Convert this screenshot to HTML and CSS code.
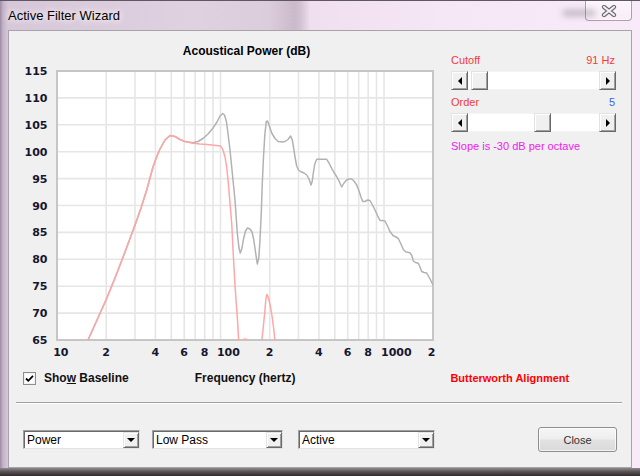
FILE: index.html
```html
<!DOCTYPE html>
<html>
<head>
<meta charset="utf-8">
<title>Active Filter Wizard</title>
<link rel="stylesheet" href="styles.css">
</head>
<body>
<div class="window">
  <div class="titlebar">
    <span class="title">Active Filter Wizard</span>
    <span class="smear"></span>
    <div class="close-btn">
      <svg class="close-x" width="16" height="12" viewBox="0 0 16 12">
        <path class="x-out" d="M3 2 L13 10 M13 2 L3 10"/>
        <path class="x-in" d="M3 2 L13 10 M13 2 L3 10"/>
      </svg>
    </div>
  </div>
  <div class="client">
    <div class="main">
      <svg class="chart" width="432" height="330" viewBox="9 31 432 330">
        <defs>
          <clipPath id="plotclip"><rect x="57" y="71" width="376" height="269.5"/></clipPath>
        </defs>
        <text class="chart-title" x="246.5" y="55" text-anchor="middle">Acoustical Power (dB)</text>
        <rect class="plot-bg" x="57" y="71" width="376" height="269"/>
        <g class="grid">
          <line x1="57" x2="433" y1="97.9" y2="97.9"/>
          <line x1="57" x2="433" y1="124.8" y2="124.8"/>
          <line x1="57" x2="433" y1="151.7" y2="151.7"/>
          <line x1="57" x2="433" y1="178.6" y2="178.6"/>
          <line x1="57" x2="433" y1="205.5" y2="205.5"/>
          <line x1="57" x2="433" y1="232.4" y2="232.4"/>
          <line x1="57" x2="433" y1="259.3" y2="259.3"/>
          <line x1="57" x2="433" y1="286.2" y2="286.2"/>
          <line x1="57" x2="433" y1="313.1" y2="313.1"/>
          <line y1="71" y2="340" x1="106.2" x2="106.2"/>
          <line y1="71" y2="340" x1="135" x2="135"/>
          <line y1="71" y2="340" x1="155.4" x2="155.4"/>
          <line y1="71" y2="340" x1="171.3" x2="171.3"/>
          <line y1="71" y2="340" x1="184.2" x2="184.2"/>
          <line y1="71" y2="340" x1="195.2" x2="195.2"/>
          <line y1="71" y2="340" x1="204.7" x2="204.7"/>
          <line y1="71" y2="340" x1="213" x2="213"/>
          <line y1="71" y2="340" x1="220.5" x2="220.5"/>
          <line y1="71" y2="340" x1="269.7" x2="269.7"/>
          <line y1="71" y2="340" x1="298.5" x2="298.5"/>
          <line y1="71" y2="340" x1="318.9" x2="318.9"/>
          <line y1="71" y2="340" x1="334.8" x2="334.8"/>
          <line y1="71" y2="340" x1="347.7" x2="347.7"/>
          <line y1="71" y2="340" x1="358.7" x2="358.7"/>
          <line y1="71" y2="340" x1="368.2" x2="368.2"/>
          <line y1="71" y2="340" x1="376.5" x2="376.5"/>
          <line y1="71" y2="340" x1="384" x2="384"/>
        </g>
        <rect class="plot-border" x="57" y="71" width="376" height="269"/>
        <g clip-path="url(#plotclip)">
          <polyline class="curve-grey" points="88,340 97,320 106,300 115,278 125,252 135,225 141,208 146.7,190 150,178 153,167 157,156 160,149 165,140 170,135.5 175,136.5 180,139.5 185,141.5 193,142.8 198,141.5 203,138.5 208,134 213,128 217,122 220,116 222.7,113.5 224.5,115 226.5,122 228.3,136 230,150 231.7,167 235,200 237.3,233 239,248 240.3,253 242,248 243.5,239 245.5,231 247.5,228 250,229 252,232 253.8,240 255.5,252 257.3,264 258.8,258 260,240 261.3,212 262.3,183 263.5,157 264.8,135 266.3,121.5 267.5,121 269,125 271.7,133 275,138.5 278.3,141.5 282,142 285,141.5 288,139.5 290.7,136 292.3,140 293.5,147 295,157 296.7,166 298.5,170 300.5,171.5 304,173 306.7,175 309,179 311,185 312.3,181 313.3,173 314.8,164 316.7,159.3 321,159.3 326.7,159.3 329,163 331.7,168.3 334,172.5 336.7,176.7 339,181 341.7,187 344,183 346.7,180 349,179 351.7,179 354,181 356.7,185 359,191 361,197 362.7,201.5 365,201.5 367.5,200 370,200.5 372.5,205 375,210 377.5,215.5 380,220.5 382.5,220.5 385,221 387.5,226 390,231.5 393,235.5 396,237 398.3,238.5 400.5,243 403.3,249.5 406,252 410,252.7 412,256 413.3,261 415.5,262.5 418.3,263.3 420,267 421.7,271.5 424,272.5 426.7,273 429.5,278 433,285"/>
          <polyline class="curve-red" points="88,340 97,320 106,300 115,278 125,252 135,225 141,208 146.7,190 150,178 153,167 157,156 160,149 165,140 170,135.5 175,136.5 180,139.5 185,141.5 193,143.3 200,144 207,144.5 214,145.3 219,145.8 221,146.5 223,150 225,157 226.8,168 228.3,183 230,203 231.7,223 233.3,255 235,285 236,300 237.5,320 238.7,341"/>
          <polyline class="curve-red" points="242,341 243.5,339.3 246.5,339.3 248,341"/>
          <polyline class="curve-red" points="261.7,341 263,330 264.5,315 265.8,300 266.7,294.5 267.8,296 269,300 270.5,307 272,316 273.5,327 275,341"/>
        </g>
        <g class="axis">
          <text x="47.5" y="75" text-anchor="end">115</text>
          <text x="47.5" y="101.9" text-anchor="end">110</text>
          <text x="47.5" y="128.8" text-anchor="end">105</text>
          <text x="47.5" y="155.7" text-anchor="end">100</text>
          <text x="47.5" y="182.6" text-anchor="end">95</text>
          <text x="47.5" y="209.5" text-anchor="end">90</text>
          <text x="47.5" y="236.4" text-anchor="end">85</text>
          <text x="47.5" y="263.3" text-anchor="end">80</text>
          <text x="47.5" y="290.2" text-anchor="end">75</text>
          <text x="47.5" y="317.1" text-anchor="end">70</text>
          <text x="47.5" y="344" text-anchor="end">65</text>
          <text x="53.2" y="356">10</text>
          <text x="106.2" y="356" text-anchor="middle">2</text>
          <text x="155.4" y="356" text-anchor="middle">4</text>
          <text x="184.2" y="356" text-anchor="middle">6</text>
          <text x="204.7" y="356" text-anchor="middle">8</text>
          <text x="216.9" y="356">100</text>
          <text x="269.7" y="356" text-anchor="middle">2</text>
          <text x="318.9" y="356" text-anchor="middle">4</text>
          <text x="347.7" y="356" text-anchor="middle">6</text>
          <text x="368.2" y="356" text-anchor="middle">8</text>
          <text x="381" y="356">1000</text>
          <text x="431.5" y="356" text-anchor="middle">2</text>
        </g>
      </svg>
      <div class="panel">
        <div class="plabel"><span>Cutoff</span><span>91 Hz</span></div>
        <div class="slider">
          <div class="arrow"><span class="tri-left"></span></div>
          <div class="track">
            <div class="track-space" style="width:3px"></div>
            <div class="thumb"></div>
          </div>
          <div class="arrow"><span class="tri-right"></span></div>
        </div>
        <div class="plabel order"><span>Order</span><span class="order-val">5</span></div>
        <div class="slider">
          <div class="arrow"><span class="tri-left"></span></div>
          <div class="track">
            <div class="track-space" style="width:66px"></div>
            <div class="thumb"></div>
          </div>
          <div class="arrow"><span class="tri-right"></span></div>
        </div>
        <div class="slope">Slope is -30 dB per octave</div>
      </div>
    </div>
    <div class="options">
      <span class="checkbox">
        <svg width="11" height="11" viewBox="0 0 11 11"><path class="check" d="M2 5.5 L4.3 7.8 L9 2.8"/></svg>
      </span>
      <span class="cb-label">Sho<span class="u">w</span> Baseline</span>
      <span class="freq-label">Frequency (hertz)</span>
      <span class="align-label">Butterworth Alignment</span>
    </div>
    <div class="sep"></div>
    <div class="controls">
      <div class="combo c1"><span class="combo-text">Power</span><span class="drop"><span class="tri-down"></span></span></div>
      <div class="combo c2"><span class="combo-text">Low Pass</span><span class="drop"><span class="tri-down"></span></span></div>
      <div class="combo c3"><span class="combo-text">Active</span><span class="drop"><span class="tri-down"></span></span></div>
      <button class="btn-close">Close</button>
    </div>
  </div>
  <div class="frame-bottom"></div>
</div>
</body>
</html>
```
FILE: styles.css
```css
* { box-sizing: border-box; }
html, body { margin: 0; padding: 0; }
body {
  width: 640px;
  height: 476px;
  overflow: hidden;
  font-family: "Liberation Sans", Arial, sans-serif;
  background: #f0f0f0;
}
.window {
  width: 640px;
  height: 476px;
  display: flex;
  flex-direction: column;
  border-top: 1px solid #5f5762;
  background: linear-gradient(to right, #9c8ca4 0, #c3b3c8 3px, #d6c7d9 8px, #e0d1e1 30%, #dccddc 42%, #cbbacb 46%, #d2c2d2 47%, #efdfef 48.5%, #f6e7f6 70%, #f8eaf8 100%);
}
.titlebar {
  height: 29px;
  flex: none;
  display: flex;
  align-items: flex-start;
  padding: 0 8px;
}
.title {
  margin-top: 7px;
  font-size: 13px;
  line-height: 16px;
  color: #000;
  text-shadow: 0 0 6px #fff, 0 0 10px rgba(255,255,255,0.8);
}
.smear {
  margin-left: auto;
  margin-top: 9px;
  margin-right: -10px;
  width: 32px;
  height: 6px;
  background: rgba(90, 80, 90, 0.35);
  filter: blur(3px);
}
.close-btn {
  width: 47px;
  height: 20px;
  border: 1px solid rgba(110, 90, 110, 0.55);
  border-top: none;
  border-radius: 0 0 4px 4px;
  background: linear-gradient(rgba(255,255,255,0.55), rgba(255,255,255,0.15));
  box-shadow: inset 0 0 0 1px rgba(255,255,255,0.45);
  display: flex;
  align-items: center;
  justify-content: center;
}
.close-x { display: block; margin-left: 0; }
.x-out { stroke: #6a6470; stroke-width: 4.2; fill: none; stroke-linecap: round; }
.x-in { stroke: #f4f0f4; stroke-width: 2.2; fill: none; stroke-linecap: round; }

.client {
  flex: none;
  height: 438px;
  margin: 0 8px;
  border: 1px solid #a7a3a8;
  background: #f0f0f0;
  display: flex;
  flex-direction: column;
}
.frame-bottom {
  flex: 1;
  background: linear-gradient(#8e8a8c, #5a5254 45%, #2f2a2c);
}

.main {
  display: flex;
  height: 330px;
  flex: none;
}
.chart { display: block; flex: none; }
.chart-title {
  font-family: "Liberation Sans", Arial, sans-serif;
  font-weight: bold;
  font-size: 12px;
  fill: #000;
}
.plot-bg { fill: #fff; }
.plot-border { fill: none; stroke: #c6c6c6; stroke-width: 2; }
.grid line { stroke: #e6e6e6; stroke-width: 1.6; }
.curve-grey { fill: none; stroke: #b2b2b2; stroke-width: 1.5; stroke-linejoin: round; }
.curve-red { fill: none; stroke: #ffa6a6; stroke-width: 1.5; stroke-linejoin: round; }
.axis text {
  font-family: "DejaVu Sans", Verdana, sans-serif;
  font-weight: bold;
  font-size: 11px;
  fill: #161630;
}

.panel {
  margin-left: 10px;
  width: 165px;
  padding-top: 23px;
  display: flex;
  flex-direction: column;
}
.plabel {
  display: flex;
  justify-content: space-between;
  font-size: 11px;
  line-height: 13px;
  color: #f03c3c;
  padding-right: 1px;
}
.plabel.order { margin-top: 6px; }
.order-val { color: #3c64e6; }
.slider {
  margin-top: 4px;
  height: 19px;
  display: flex;
}
.arrow {
  width: 17px;
  height: 19px;
  background: #f0f0f0;
  border: 1px solid;
  border-color: #e3e3e3 #696969 #696969 #e3e3e3;
  box-shadow: inset 1px 1px 0 #fff, inset -1px -1px 0 #a0a0a0;
  display: flex;
  align-items: center;
  justify-content: center;
}
.tri-left {
  width: 0; height: 0;
  border-top: 4px solid transparent;
  border-bottom: 4px solid transparent;
  border-right: 4px solid #000;
}
.tri-right {
  width: 0; height: 0;
  border-top: 4px solid transparent;
  border-bottom: 4px solid transparent;
  border-left: 4px solid #000;
}
.track {
  flex: 1;
  display: flex;
  background: #fff;
  border-top: 1px solid #f4f4f4;
  border-bottom: 1px solid #f4f4f4;
}
.track-space { flex: none; }
.thumb {
  width: 17px;
  margin: -1px 0;
  background: #f0f0f0;
  border: 1px solid;
  border-color: #e3e3e3 #696969 #696969 #e3e3e3;
  box-shadow: inset 1px 1px 0 #fff, inset -1px -1px 0 #a0a0a0;
}
.slope {
  margin-top: 8px;
  font-size: 11px;
  line-height: 13px;
  color: #f020f0;
}

.options {
  display: flex;
  align-items: center;
  height: 16px;
  margin-top: 9px;
  padding-left: 14px;
  flex: none;
}
.checkbox {
  width: 13px;
  height: 13px;
  border: 1px solid #8e8f8f;
  background: #fff;
  display: flex;
  align-items: center;
  justify-content: center;
  box-shadow: inset 0 0 0 1px #f2f2f2;
}
.checkbox svg { display: block; }
.check { fill: none; stroke: #000; stroke-width: 1.8; }
.cb-label {
  margin-left: 8px;
  font-size: 12px;
  font-weight: bold;
  color: #111;
}
.u { text-decoration: underline; }
.freq-label {
  margin-left: 66px;
  font-size: 12px;
  font-weight: bold;
  color: #111;
}
.align-label {
  margin-left: 155px;
  font-size: 11px;
  font-weight: bold;
  color: #ff0000;
}
.sep {
  flex: none;
  margin: 16px 9px 0 7px;
  border-top: 1px solid #a0a0a0;
  border-bottom: 1px solid #fff;
}
.controls {
  flex: none;
  display: flex;
  align-items: center;
  height: 25px;
  margin-top: 23px;
  padding: 0 14px;
}
.combo {
  height: 19px;
  display: flex;
  background: #fff;
  border: 1px solid;
  border-color: #a0a0a0 #e3e3e3 #e3e3e3 #a0a0a0;
  box-shadow: inset 1px 1px 0 #696969;
  padding: 1px 0 0 1px;
}
.c1 { width: 117px; }
.c2 { width: 131px; margin-left: 12px; }
.c3 { width: 137px; margin-left: 15px; }
.combo-text {
  flex: 1;
  font-size: 12px;
  line-height: 16px;
  color: #000;
  padding-left: 2px;
}
.drop {
  width: 16px;
  background: #f0f0f0;
  border: 1px solid;
  border-color: #e3e3e3 #696969 #696969 #e3e3e3;
  box-shadow: inset 1px 1px 0 #fff, inset -1px -1px 0 #a0a0a0;
  display: flex;
  align-items: center;
  justify-content: center;
}
.tri-down {
  width: 0; height: 0;
  border-left: 4px solid transparent;
  border-right: 4px solid transparent;
  border-top: 4px solid #000;
}
.btn-close {
  margin-left: auto;
  width: 79px;
  height: 25px;
  padding: 0;
  border: 1px solid #8e8e8e;
  border-radius: 3px;
  background: linear-gradient(#f6f6f6 0%, #eeeeee 48%, #e2e2e2 52%, #dadada 100%);
  box-shadow: inset 0 0 0 1px rgba(255,255,255,0.7);
  font-family: "Liberation Sans", Arial, sans-serif;
  font-size: 11px;
  color: #333;
}
```
